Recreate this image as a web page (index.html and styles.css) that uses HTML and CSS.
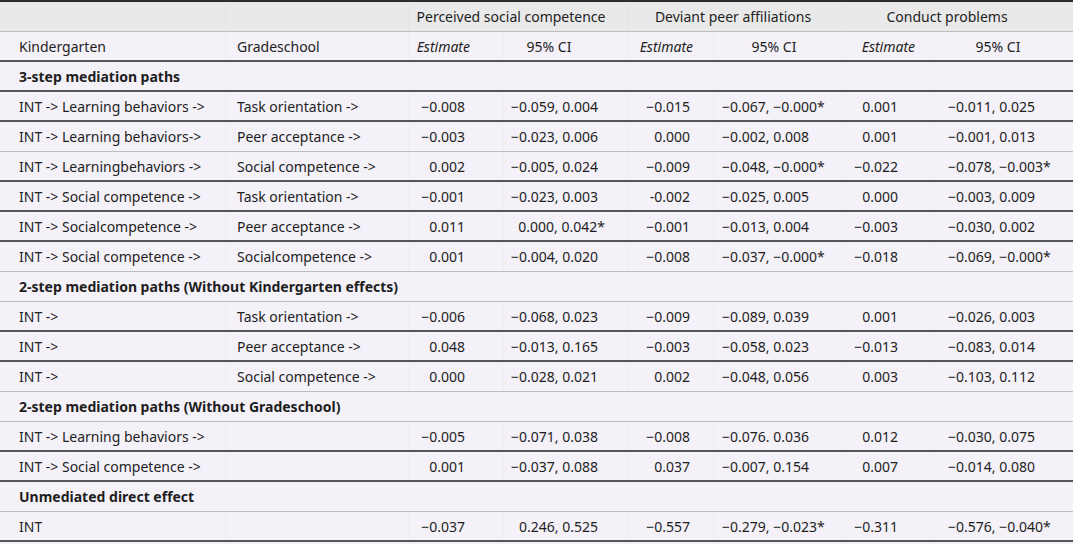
FILE: index.html
```html
<!DOCTYPE html>
<html lang="en">
<head>
  <meta charset="UTF-8">
  <title>Mediation paths</title>
  <link rel="stylesheet" href="styles.css">
</head>
<body>

  <table class="results">
    <colgroup>
      <col class="w-kg"><col class="w-gs">
      <col class="w-est1"><col class="w-ci1">
      <col class="w-est2"><col class="w-ci2">
      <col class="w-est3"><col class="w-ci3">
    </colgroup>
    <thead>
      <tr class="groups light">
        <th></th>
        <th></th>
        <th colspan="2" class="g1">Perceived social competence</th>
        <th colspan="2" class="g2">Deviant peer affiliations</th>
        <th colspan="2" class="g3">Conduct problems</th>
      </tr>
      <tr class="subheads">
        <th>Kindergarten</th>
        <th>Gradeschool</th>
        <th><em>Estimate</em></th>
        <th>95% CI</th>
        <th><em>Estimate</em></th>
        <th>95% CI</th>
        <th><em>Estimate</em></th>
        <th>95% CI</th>
      </tr>
    </thead>
    <tbody>
      <!-- 3-step -->
      <tr class="section"><td colspan="8">3-step mediation paths</td></tr>
      <tr>
        <td>INT -&gt; Learning behaviors -&gt;</td><td>Task orientation -&gt;</td>
        <td>−0.008</td><td>−0.059, 0.004</td>
        <td>−0.015</td><td>−0.067, −0.000*</td>
        <td>0.001</td><td>−0.011, 0.025</td>
      </tr>
      <tr class="light">
        <td>INT -&gt; Learning behaviors-&gt;</td><td>Peer acceptance -&gt;</td>
        <td>−0.003</td><td>−0.023, 0.006</td>
        <td>0.000</td><td>−0.002, 0.008</td>
        <td>0.001</td><td>−0.001, 0.013</td>
      </tr>
      <tr>
        <td>INT -&gt; Learningbehaviors -&gt;</td><td>Social competence -&gt;</td>
        <td>0.002</td><td>−0.005, 0.024</td>
        <td>−0.009</td><td>−0.048, −0.000*</td>
        <td>−0.022</td><td>−0.078, −0.003*</td>
      </tr>
      <tr>
        <td>INT -&gt; Social competence -&gt;</td><td>Task orientation -&gt;</td>
        <td>−0.001</td><td>−0.023, 0.003</td>
        <td>-0.002</td><td>−0.025, 0.005</td>
        <td>0.000</td><td>−0.003, 0.009</td>
      </tr>
      <tr>
        <td>INT -&gt; Socialcompetence -&gt;</td><td>Peer acceptance -&gt;</td>
        <td>0.011</td><td>0.000, 0.042<span class="sig">*</span></td>
        <td>−0.001</td><td>−0.013, 0.004</td>
        <td>−0.003</td><td>−0.030, 0.002</td>
      </tr>
      <tr class="light">
        <td>INT -&gt; Social competence -&gt;</td><td>Socialcompetence -&gt;</td>
        <td>0.001</td><td>−0.004, 0.020</td>
        <td>−0.008</td><td>−0.037, −0.000*</td>
        <td>−0.018</td><td>−0.069, −0.000*</td>
      </tr>

      <!-- 2-step, no kindergarten -->
      <tr class="section light"><td colspan="8">2-step mediation paths (Without Kindergarten effects)</td></tr>
      <tr>
        <td>INT -&gt;</td><td>Task orientation -&gt;</td>
        <td>−0.006</td><td>−0.068, 0.023</td>
        <td>−0.009</td><td>−0.089, 0.039</td>
        <td>0.001</td><td>−0.026, 0.003</td>
      </tr>
      <tr>
        <td>INT -&gt;</td><td>Peer acceptance -&gt;</td>
        <td>0.048</td><td>−0.013, 0.165</td>
        <td>−0.003</td><td>−0.058, 0.023</td>
        <td>−0.013</td><td>−0.083, 0.014</td>
      </tr>
      <tr class="light">
        <td>INT -&gt;</td><td>Social competence -&gt;</td>
        <td>0.000</td><td>−0.028, 0.021</td>
        <td>0.002</td><td>−0.048, 0.056</td>
        <td>0.003</td><td>−0.103, 0.112</td>
      </tr>

      <!-- 2-step, no gradeschool -->
      <tr class="section light"><td colspan="8">2-step mediation paths (Without Gradeschool)</td></tr>
      <tr>
        <td>INT -&gt; Learning behaviors -&gt;</td><td></td>
        <td>−0.005</td><td>−0.071, 0.038</td>
        <td>−0.008</td><td>−0.076. 0.036</td>
        <td>0.012</td><td>−0.030, 0.075</td>
      </tr>
      <tr>
        <td>INT -&gt; Social competence -&gt;</td><td></td>
        <td>0.001</td><td>−0.037, 0.088</td>
        <td>0.037</td><td>−0.007, 0.154</td>
        <td>0.007</td><td>−0.014, 0.080</td>
      </tr>

      <!-- direct -->
      <tr class="section light"><td colspan="8">Unmediated direct effect</td></tr>
      <tr>
        <td>INT</td><td></td>
        <td>−0.037</td><td>0.246, 0.525</td>
        <td>−0.557</td><td>−0.279, −0.023*</td>
        <td>−0.311</td><td>−0.576, −0.040*</td>
      </tr>
    </tbody>
  </table>

</body>
</html>
```

FILE: styles.css
```css
body {
  margin: 0;
  background-color: #f4f1f8;
  font-family: "Noto Sans", "Open Sans", sans-serif;
  font-size: 14px;
  color: #1e1e1e;
}
.results {
  width: 1073px;
  table-layout: fixed;
  border-collapse: separate;
  border-spacing: 0;
  border-top: 2px solid #2b2b2b;
}
.w-kg { width: 225px; }
.w-gs { width: 183px; }
.w-est1 { width: 95px; }
.w-ci1 { width: 125px; }
.w-est2 { width: 85px; }
.w-ci2 { width: 129px; }
.w-est3 { width: 88px; }
.w-ci3 { width: 143px; }

th, td {
  height: 30px; box-sizing: border-box; padding: 0;
  font-weight: normal; white-space: nowrap; text-align: left;
  border-bottom: 2px solid #555;
}
th + th, td + td { box-shadow: inset 1px 0 0 #efecf3; }
tr.light > th, tr.light > td { border-bottom: 1px solid #bcbcbc; }
th em { font-style: italic; }

/* header rows */
.groups th { background-color: #e9e9e9; text-align: center; }
.groups th + th { box-shadow: inset 1px 0 0 #e4e4e4; }
.groups .g1 { padding-right: 14px; }
.groups .g2 { padding-right: 4px; }
.groups .g3 { padding-right: 21px; }
.subheads th:nth-child(1) { padding-left: 19px; }
.subheads th:nth-child(2) { padding-left: 12px; }
.subheads th:nth-child(3) { text-align: right; padding-right: 33px; }
.subheads th:nth-child(4) { text-align: center; padding-right: 33px; }
.subheads th:nth-child(5) { text-align: right; padding-right: 20px; }
.subheads th:nth-child(6) { text-align: center; padding-right: 7px; }
.subheads th:nth-child(7) { text-align: right; padding-right: 15px; }
.subheads th:nth-child(8) { text-align: center; padding-right: 7px; }

/* body cells */
td:nth-child(1) { padding-left: 19px; }
td:nth-child(2) { padding-left: 12px; }
td:nth-child(3) { text-align: right; padding-right: 38px; }
td:nth-child(4) { text-align: right; padding-right: 30px; }
td:nth-child(5) { text-align: right; padding-right: 23px; }
td:nth-child(6) { padding-left: 9px; }
td:nth-child(7) { text-align: right; padding-right: 32px; }
td:nth-child(8) { padding-left: 18px; }
.section td { font-weight: bold; }
.sig { margin-right: -7px; }
```
